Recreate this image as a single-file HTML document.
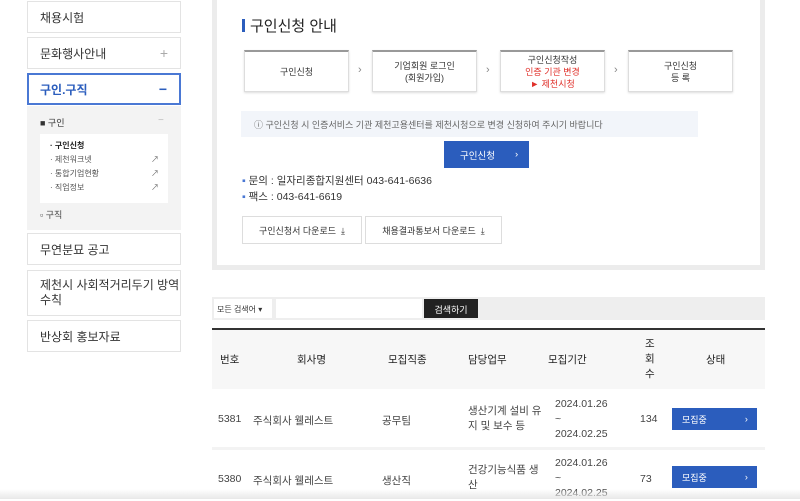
<!DOCTYPE html>
<html><head><meta charset="utf-8"><style>
*{margin:0;padding:0;box-sizing:border-box}
body{width:800px;height:499px;overflow:hidden;background:#fff;font-family:"Liberation Sans","Noto Sans CJK KR",sans-serif;color:#333;position:relative}
.a{position:absolute}
.sb{position:absolute;left:27px;width:154px;border:1px solid #e3e3e3;background:#fff;font-size:12px;color:#333;padding-left:12px;display:flex;align-items:center}
.step{position:absolute;top:50px;width:105px;height:42px;border:1px solid #ddd;border-top:2px solid #999;font-size:9px;text-align:center;display:flex;flex-direction:column;justify-content:center;line-height:12px;color:#333;box-shadow:0 1px 2px #ddd}
.arr{position:absolute;top:64px;font-size:11px;color:#888}
.th{position:absolute;font-size:10.5px;color:#222;text-align:center}
.td{position:absolute;font-size:10.5px;color:#444}
.btn{position:absolute;background:#2b5dbd;color:#fff;font-size:9px;padding-left:10px;display:flex;align-items:center}
</style></head><body>
<div class="sb" style="top:1px;height:32px">채용시험</div>
<div class="sb" style="top:37px;height:32px">문화행사안내<span class="a" style="right:12px;color:#aaa;font-size:14px">+</span></div>
<div class="sb" style="top:73px;height:32px;border:2px solid #4a78d4;color:#2b5dbd;font-weight:bold;padding-left:11px">구인.구직<span class="a" style="right:12px;font-size:14px">−</span></div>
<div class="a" style="left:27px;top:106px;width:154px;height:124px;background:#f3f3f3"></div>
<div class="a" style="left:40px;top:116px;font-size:9px;color:#333">■ 구인</div>
<div class="a" style="left:158px;top:115px;font-size:10px;color:#bbb">−</div>
<div class="a" style="left:40px;top:134px;width:128px;height:69px;background:#fff;font-size:8px;line-height:14px;padding:5px 10px;color:#555">
<div style="font-weight:bold;color:#222">· 구인신청</div><div>· 제천워크넷</div><div>· 통합기업현황</div><div>· 직업정보</div>
<div class="a" style="right:9px;top:19px;color:#666;line-height:14px;font-size:8px">↗<br>↗<br>↗</div></div>
<div class="a" style="left:40px;top:208px;font-size:9px;color:#444">▫ 구직</div>
<div class="sb" style="top:233px;height:32px">무연분묘 공고</div>
<div class="sb" style="top:270px;height:46px;line-height:15px">제천시 사회적거리두기 방역<br>수칙</div>
<div class="sb" style="top:320px;height:32px">반상회 홍보자료</div>

<div class="a" style="left:212px;top:0;width:553px;height:270px;background:#ececec"></div>
<div class="a" style="left:217px;top:0;width:543px;height:265px;background:#fff"></div>
<div class="a" style="left:242px;top:19px;width:3px;height:13px;background:#2b5dbd"></div>
<div class="a" style="left:250px;top:15px;font-size:15px;color:#222">구인신청 안내</div>
<div class="step" style="left:244px">구인신청</div>
<div class="arr" style="left:358px">›</div>
<div class="step" style="left:372px">기업회원 로그인<br>(회원가입)</div>
<div class="arr" style="left:486px">›</div>
<div class="step" style="left:500px">구인신청작성<br><span style="color:#e0302a">인증 기관 변경</span><span style="color:#e0302a">► 제천시청</span></div>
<div class="arr" style="left:614px">›</div>
<div class="step" style="left:628px">구인신청<br>등 록</div>
<div class="a" style="left:241px;top:111px;width:457px;height:26px;background:#f2f5fa;font-size:9px;color:#666;padding:7px 0 0 13px">ⓘ 구인신청 시 인증서비스 기관 제천고용센터를 제천시청으로 변경 신청하여 주시기 바랍니다</div>
<div class="a" style="left:444px;top:141px;width:85px;height:27px;background:#2b5dbd;color:#fff;font-size:9.5px;display:flex;align-items:center;padding-left:16px">구인신청<span style="margin-left:20px">›</span></div>
<div class="a" style="left:242px;top:173px;font-size:10.5px;color:#333;line-height:16px"><span style="color:#4a78d4">▪</span> 문의 : 일자리종합지원센터 043-641-6636<br><span style="color:#4a78d4">▪</span> 팩스 : 043-641-6619</div>
<div class="a" style="left:242px;top:216px;width:120px;height:28px;border:1px solid #ddd;font-size:9px;display:flex;align-items:center;justify-content:center">구인신청서 다운로드 &nbsp;⤓</div>
<div class="a" style="left:365px;top:216px;width:137px;height:28px;border:1px solid #ddd;font-size:9px;display:flex;align-items:center;justify-content:center">채용결과통보서 다운로드 &nbsp;⤓</div>

<div class="a" style="left:212px;top:297px;width:553px;height:23px;background:#eee"></div>
<div class="a" style="left:214px;top:299px;width:58px;height:19px;background:#fff;font-size:8px;padding:5px 0 0 3px">모든 검색어 ▾</div>
<div class="a" style="left:276px;top:299px;width:146px;height:19px;background:#fff"></div>
<div class="a" style="left:424px;top:299px;width:54px;height:19px;background:#222;color:#fff;font-size:9px;text-align:center;padding-top:4px">검색하기</div>
<div class="a" style="left:212px;top:328px;width:553px;height:2px;background:#333"></div>
<div class="a" style="left:212px;top:330px;width:553px;height:59px;background:#f7f7f7"></div>
<div class="th" style="left:220px;top:352px">번호</div>
<div class="th" style="left:297px;top:352px">회사명</div>
<div class="th" style="left:388px;top:352px">모집직종</div>
<div class="th" style="left:468px;top:352px">담당업무</div>
<div class="th" style="left:548px;top:352px">모집기간</div>
<div class="th" style="left:645px;top:337px;line-height:15px">조<br>회<br>수</div>
<div class="th" style="left:706px;top:352px">상태</div>
<div class="a" style="left:212px;top:447px;width:553px;height:3px;background:#f3f3f3"></div>
<div class="td" style="left:218px;top:413px">5381</div>
<div class="td" style="left:253px;top:413px">주식회사 웰레스트</div>
<div class="td" style="left:382px;top:413px">공무팀</div>
<div class="td" style="left:468px;top:404px;line-height:15px">생산기계 설비 유<br>지 및 보수 등</div>
<div class="td" style="left:555px;top:397px;line-height:15px">2024.01.26<br>~<br>2024.02.25</div>
<div class="td" style="left:640px;top:413px">134</div>
<div class="btn" style="left:672px;top:408px;width:85px;height:22px">모집중<span style="margin-left:38px">›</span></div>
<div class="td" style="left:218px;top:473px">5380</div>
<div class="td" style="left:253px;top:473px">주식회사 웰레스트</div>
<div class="td" style="left:382px;top:473px">생산직</div>
<div class="td" style="left:468px;top:463px;line-height:15px">건강기능식품 생<br>산</div>
<div class="td" style="left:555px;top:456px;line-height:15px">2024.01.26<br>~<br>2024.02.25</div>
<div class="td" style="left:640px;top:473px">73</div>
<div class="btn" style="left:672px;top:466px;width:85px;height:22px">모집중<span style="margin-left:38px">›</span></div>
<div class="a" style="left:0;top:489px;width:800px;height:10px;background:linear-gradient(rgba(240,240,240,0),#e8e8e8)"></div>
</body></html>
